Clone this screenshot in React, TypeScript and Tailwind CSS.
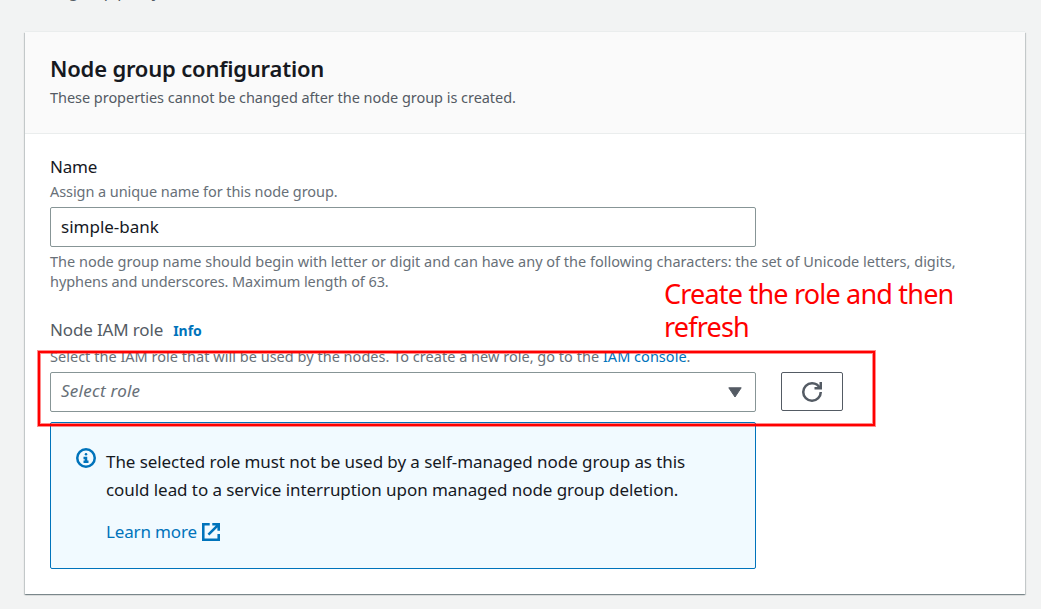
import React from "react";

const ui = "font-['Noto_Sans',sans-serif]";

function InfoIcon() {
  return (
    <svg className="mt-[-1px] size-5 shrink-0" viewBox="0 0 16 16" fill="none" stroke="#0073bb" strokeWidth="2">
      <circle cx="8" cy="8" r="7" />
      <path d="M8 11V8H6M10 11H6" />
      <path d="M7.99 5H8v.01h-.01z" strokeLinejoin="round" />
    </svg>
  );
}

function ExternalIcon() {
  return (
    <svg className="size-[18px]" viewBox="1 1 14 14" fill="none" stroke="#0073bb" strokeWidth="2">
      <path d="M9 2h5v5M6 10l8-8M14 9.5V14H2V2h5" />
    </svg>
  );
}

function RefreshIcon() {
  return (
    <svg className="size-5" viewBox="0 0 16 16" fill="none" stroke="#545b64" strokeWidth="2">
      <path d="M10 5h5V0" />
      <path d="M15 8a6.957 6.957 0 0 1-7 7 6.957 6.957 0 0 1-7-7 6.957 6.957 0 0 1 7-7 6.87 6.87 0 0 1 6.3 4" />
    </svg>
  );
}

export default function App() {
  return (
    <div className={`relative h-[609px] w-[1041px] overflow-hidden bg-[#f2f3f3] px-[25px] text-[#16191f] ${ui}`}>
      <div className="flex h-8 items-start overflow-hidden">
        <p className="mt-[-21px] text-[16px] leading-6 tracking-[-0.2px] whitespace-nowrap text-[#545b64]">Node group policy</p>
      </div>
      <section className="h-[562px] w-[1000px] bg-white shadow-[0_-1px_0_0_#eaeded,0_1px_1px_0_rgba(0,28,36,0.3),1px_1px_1px_0_rgba(0,28,36,0.15),-1px_1px_1px_0_rgba(0,28,36,0.15)]">
        <header className="h-[102px] border-b border-[#eaeded] bg-[#fafafa] px-[25px] pt-[21px]">
          <h2 className="text-[22px] leading-[30px] font-semibold tracking-[-0.2px] whitespace-nowrap">Node group configuration</h2>
          <p className="mt-1 text-[14.5px] leading-5 tracking-[-0.04px] whitespace-nowrap text-[#545b64]">These properties cannot be changed after the node group is created.</p>
        </header>
        <div className="px-[25px] pt-[19px]">
          <label className="block h-7 text-[17px] leading-7 tracking-[-0.2px]">Name</label>
          <p className="h-5 text-[14.5px] leading-5 tracking-[-0.07px] whitespace-nowrap text-[#687078]">Assign a unique name for this node group.</p>
          <div className="mt-[6px] flex h-10 w-[706px] items-center rounded-[2px] border border-[#879596] px-[10px] text-[17px]">simple-bank</div>
          <p className="mt-[4px] text-[14.5px] leading-5 whitespace-nowrap text-[#687078]">
            The node group name should begin with letter or digit and can have any of the following characters: the set of Unicode letters, digits,
            <br />
            <span className="tracking-[-0.08px]">hyphens and underscores. Maximum length of 63.</span>
          </p>
          <div className="mt-[25px] flex h-7 items-center gap-[10px] text-[17px] text-[#545b64]">
            <span className="tracking-[-0.15px]">Node IAM role</span>
            <span className="text-[14px] font-bold text-[#0073bb]">Info</span>
          </div>
          <p className="mt-[2px] h-5 text-[14.5px] leading-5 tracking-[0.02px] whitespace-nowrap text-[#687078]">
            Select the IAM role that will be used by the nodes. To create a new role, go to the <span className="text-[#0073bb]">IAM console</span>.
          </p>
          <div className="mt-[6px] flex gap-[25px]">
            <div className="flex h-10 w-[706px] items-center justify-between rounded-[2px] border border-[#879596] pr-[13px] pl-[10px] text-[17px] text-[#687078]">
              <span className="pb-[2px] tracking-[0.25px] italic">Select role</span>
              <svg className="h-[11px] w-[14px]" viewBox="0 0 14 11"><path d="M.8.8h12.4L7 10z" fill="#545b64" stroke="#545b64" strokeLinejoin="round" /></svg>
            </div>
            <button className="flex h-[39px] w-[62px] items-center justify-center rounded-[2px] border border-[#545b64]"><RefreshIcon /></button>
          </div>
          <div className="mt-[10px] flex h-[147px] w-[706px] gap-[10px] rounded-[2px] border border-[#0073bb] bg-[#f1faff] pt-[26px] pl-[25px]">
            <InfoIcon />
            <div className="mt-[-1px] text-[17px] leading-7 tracking-[-0.07px] whitespace-nowrap">
              <p>The selected role must not be used by a self-managed node group as this</p>
              <p>could lead to a service interruption upon managed node group deletion.</p>
              <a className="mt-[14px] flex items-center gap-[5px] tracking-[-0.15px] text-[#0073bb]">Learn more <ExternalIcon /></a>
            </div>
          </div>
        </div>
      </section>
      <div className="absolute top-[351px] left-[38px] h-[75px] w-[837px] border-2 border-[#ff0000] shadow-[0_0_0_1px_rgba(255,0,0,0.45),inset_0_0_0_1px_rgba(255,0,0,0.45)]" />
      <p className="absolute top-[277px] left-[664px] font-['Noto_Sans',sans-serif] text-[27px] leading-[33px] tracking-[-0.8px] whitespace-nowrap text-[#ff0000]">Create the role and then<br />refresh</p>
    </div>
  );
}
